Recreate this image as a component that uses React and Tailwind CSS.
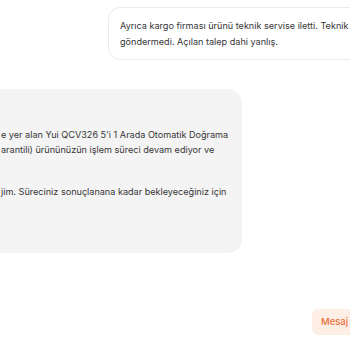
import React from "react";

export default function App() {
  const font = { fontFamily: "Inter, 'Liberation Sans', sans-serif" };
  return (
    <div className="w-[350px] h-[350px] overflow-hidden bg-white relative flex flex-col text-[#363636]" style={font}>
      <div className="mt-[7px] ml-[108px] w-[280px] shrink-0 rounded-[12px] border border-[#ececec] bg-white pl-[11px] pt-[10px] pb-[9px] text-[9.1px] leading-[16px] whitespace-nowrap">
        <div>Ayrıca kargo firması ürünü teknik servise iletti. Teknik</div>
        <div>göndermedi. Açılan talep dahi yanlış.</div>
      </div>

      <div className="mt-[29px] w-[242px] h-[164px] shrink-0 rounded-r-[14px] bg-[#f4f4f4] pl-[1px] pt-[38px] text-[9.1px] leading-[15px] whitespace-nowrap overflow-hidden">
        <div>e yer alan Yui QCV326 5'i 1 Arada Otomatik Doğrama</div>
        <div>arantili) ürününüzün işlem süreci devam ediyor ve</div>
        <div className="mt-[27px]">jim. Süreciniz sonuçlanana kadar bekleyeceğiniz için</div>
      </div>

      <div className="mt-[56px] ml-[312px] w-[60px] h-[26px] shrink-0 rounded-[6px] bg-[#fdeee6] pl-[9px] flex items-center text-[9.5px] font-medium text-[#e8703a]">
        Mesaj
      </div>
    </div>
  );
}
